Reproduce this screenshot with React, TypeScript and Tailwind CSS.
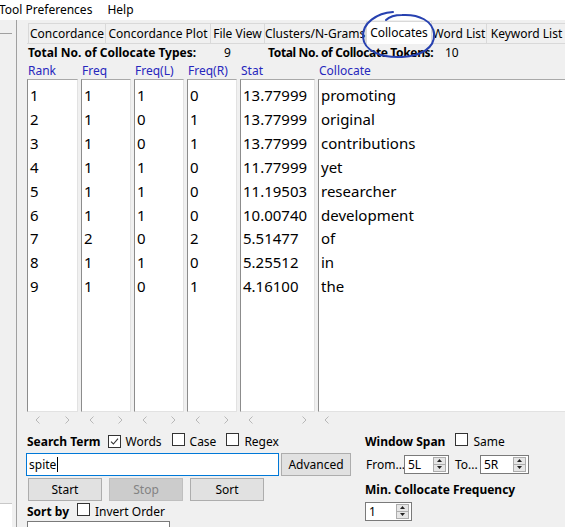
import React from "react"

type Row = [string, string, string, string, string, string]

const ROWS: Row[] = [
  ["1", "1", "1", "0", "13.77999", "promoting"],
  ["2", "1", "0", "1", "13.77999", "original"],
  ["3", "1", "0", "1", "13.77999", "contributions"],
  ["4", "1", "1", "0", "11.77999", "yet"],
  ["5", "1", "1", "0", "11.19503", "researcher"],
  ["6", "1", "1", "0", "10.00740", "development"],
  ["7", "2", "0", "2", "5.51477", "of"],
  ["8", "1", "1", "0", "5.25512", "in"],
  ["9", "1", "0", "1", "4.16100", "the"],
]

const COLUMNS = [
  { label: "Rank", width: "w-[51px]" },
  { label: "Freq", width: "w-[50px]" },
  { label: "Freq(L)", width: "w-[50px]" },
  { label: "Freq(R)", width: "w-[50px]" },
  { label: "Stat", width: "w-[75px]" },
  { label: "Collocate", width: "w-[260px]" },
]

const TABS = [
  { label: "Concordance", width: "w-[78px]" },
  { label: "Concordance Plot", width: "w-[105px]" },
  { label: "File View", width: "w-[54px]" },
  { label: "Clusters/N-Grams", width: "w-[101px]" },
  { label: "Collocates", width: "w-[66px]", active: true },
  { label: "Word List", width: "w-[55px]" },
  { label: "Keyword List", width: "w-[80px]" },
]

function Check({ checked }: { checked?: boolean }) {
  return (
    <span className="inline-flex h-[13px] w-[13px] shrink-0 items-center justify-center border border-[#333] bg-white">
      {checked && (
        <svg width="9" height="9" viewBox="0 0 9 9">
          <path d="M1 4.6 L3.4 7 L8 1.6" stroke="#333" strokeWidth="1.1" fill="none" />
        </svg>
      )}
    </span>
  )
}

function Chevron({ dir }: { dir: "left" | "right" }) {
  return (
    <svg width="5" height="8" viewBox="0 0 5 8">
      <path
        d={dir === "left" ? "M4.5 0.5 L1 4 L4.5 7.5" : "M0.5 0.5 L4 4 L0.5 7.5"}
        stroke="#b8b8b8"
        strokeWidth="1"
        fill="none"
      />
    </svg>
  )
}

function Spinner({ value, width }: { value: string; width: string }) {
  return (
    <div className={`flex h-[19px] ${width} shrink-0 border border-[#7a7a7a] bg-white`}>
      <span className="flex-1 pl-[3px] text-[12px] leading-[17px]">{value}</span>
      <div className="my-[1px] mr-[2px] flex w-[13px] flex-col">
        <span className="flex h-[8px] items-center justify-center border border-[#adadad] bg-[#e6e6e6]">
          <svg width="5" height="3" viewBox="0 0 5 3">
            <path d="M0 3 L2.5 0 L5 3 Z" fill="#222" />
          </svg>
        </span>
        <span className="flex h-[8px] items-center justify-center border border-t-0 border-[#adadad] bg-[#e6e6e6]">
          <svg width="5" height="3" viewBox="0 0 5 3">
            <path d="M0 0 L2.5 3 L5 0 Z" fill="#222" />
          </svg>
        </span>
      </div>
    </div>
  )
}

function Button({ label, width, disabled }: { label: string; width: string; disabled?: boolean }) {
  return (
    <div
      className={`flex h-[23px] ${width} shrink-0 items-center justify-center border text-[12px] ${
        disabled ? "border-[#bfbfbf] bg-[#cccccc] text-[#838383]" : "border-[#adadad] bg-[#e1e1e1] text-black"
      }`}
    >
      {label}
    </div>
  )
}

export default function App() {
  return (
    <div className="relative h-[527px] w-[565px] overflow-hidden bg-[#f0f0f0] font-['Noto_Sans',sans-serif] text-black">
      {/* Menu bar */}
      <div className="flex h-[20px] items-center bg-white text-[12px]">
        <span className="-ml-[1px]">Tool Preferences</span>
        <span className="ml-[15px]">Help</span>
      </div>

      <div className="flex h-[507px]">
        {/* Left panel strip */}
        <div className="flex w-[17px] shrink-0 flex-col border-r border-[#a0a0a0]">
          <div className="mt-[13px] w-[12px] border-t border-[#a0a0a0]" />
          <div className="flex-1" />
          <div className="h-[24px] w-[12px] border-t border-[#c8c8c8] bg-white" />
        </div>

        {/* Main tab panel */}
        <div className="flex min-w-0 flex-1 flex-col overflow-hidden pl-[10px]">
          {/* Tabs */}
          <div className="mt-[4px] flex h-[20px] shrink-0 items-end border-b border-[#d9d9d9] pl-[1px]">
            {TABS.map((tab) =>
              tab.active ? (
                <div
                  key={tab.label}
                  className={`-mb-[1px] flex h-[23px] ${tab.width} shrink-0 items-center justify-center border border-b-0 border-[#d9d9d9] bg-white text-[12px]`}
                >
                  {tab.label}
                </div>
              ) : (
                <div
                  key={tab.label}
                  className={`flex h-[20px] ${tab.width} shrink-0 items-center justify-center whitespace-nowrap border border-b-0 border-l-0 border-[#d9d9d9] bg-[#f0f0f0] pt-[1px] text-[12px] first:border-l`}
                >
                  {tab.label}
                </div>
              )
            )}
          </div>

          {/* Totals */}
          <div className="flex h-[18px] shrink-0 items-center pl-[1px] text-[12px]">
            <span className="w-[196px] shrink-0 font-bold">Total No. of Collocate Types:</span>
            <span className="w-[44px] shrink-0">9</span>
            <span className="w-[177px] shrink-0 whitespace-nowrap font-bold tracking-[-0.35px]">
              Total No. of Collocate Tokens:
            </span>
            <span>10</span>
          </div>

          {/* Column headers */}
          <div className="flex h-[17px] shrink-0 items-center gap-[3px] text-[12px] text-[#2727bd]">
            {COLUMNS.map((col) => (
              <div key={col.label} className={`${col.width} shrink-0 pl-[1px]`}>
                {col.label}
              </div>
            ))}
          </div>

          {/* Lists */}
          <div className="flex h-[333px] shrink-0 gap-[3px]">
            {COLUMNS.map((col, ci) => (
              <div
                key={col.label}
                className={`${col.width} shrink-0 border border-[#e2e2e2] border-l-[#8c8c8c] border-t-[#a9a9a9] bg-white pl-[2px] pt-[4px] text-[15px] leading-[23.9px]`}
              >
                {ROWS.map((row) => (
                  <div key={row[0]} className="whitespace-nowrap">
                    {row[ci]}
                  </div>
                ))}
              </div>
            ))}
          </div>

          {/* Horizontal scroll arrows */}
          <div className="flex h-[16px] shrink-0 gap-[3px]">
            {COLUMNS.map((col, ci) => (
              <div
                key={col.label}
                className={`${col.width} flex shrink-0 items-center justify-between ${ci === 5 ? "pl-[6px]" : "px-[8px]"}`}
              >
                <Chevron dir="left" />
                {ci !== 5 && <Chevron dir="right" />}
              </div>
            ))}
          </div>

          {/* Search controls */}
          <div className="flex shrink-0">
            <div className="flex w-[338px] shrink-0 flex-col">
              <div className="mt-[4px] flex h-[20px] items-center text-[12px]">
                <span className="font-bold">Search Term</span>
                <span className="ml-[7px]"><Check checked /></span>
                <span className="ml-[5px]">Words</span>
                <span className="ml-[10px]"><Check /></span>
                <span className="ml-[5px]">Case</span>
                <span className="ml-[10px]"><Check /></span>
                <span className="ml-[5px]">Regex</span>
              </div>
              <div className="mt-[1px] flex gap-[2px]">
                <div className="-ml-[1px] flex h-[23px] w-[253px] items-center border border-[#0078d7] bg-white pl-[2px] text-[12px]">
                  spite
                  <span className="ml-[1px] h-[15px] w-[1px] bg-black" />
                </div>
                <Button label="Advanced" width="w-[70px]" />
              </div>
              <div className="mt-[2px] flex gap-[7px] pl-[1px]">
                <Button label="Start" width="w-[74px]" />
                <Button label="Stop" width="w-[74px]" disabled />
                <Button label="Sort" width="w-[74px]" />
              </div>
              <div className="mt-[1px] flex h-[19px] items-center text-[12px]">
                <span className="font-bold">Sort by</span>
                <span className="ml-[8px]"><Check /></span>
                <span className="ml-[5px]">Invert Order</span>
              </div>
              <div className="h-[10px] w-[143px] border border-b-0 border-[#7a7a7a] bg-white" />
            </div>

            <div className="flex flex-col">
              <div className="mt-[4px] flex h-[20px] items-center text-[12px]">
                <span className="font-bold">Window Span</span>
                <span className="ml-[10px]"><Check /></span>
                <span className="ml-[5px]">Same</span>
              </div>
              <div className="mt-[3px] flex h-[19px] items-center text-[12px]">
                <span className="w-[39px] shrink-0 pl-[1px]">From...</span>
                <Spinner value="5L" width="w-[45px]" />
                <span className="ml-[6px] w-[25px] shrink-0">To...</span>
                <Spinner value="5R" width="w-[49px]" />
              </div>
              <div className="mt-[6px] flex h-[20px] items-center whitespace-nowrap text-[12px] font-bold">
                Min. Collocate Frequency
              </div>
              <div className="mt-[2px]">
                <Spinner value="1" width="w-[47px]" />
              </div>
            </div>
          </div>
        </div>
      </div>

      {/* Hand-drawn annotation around the Collocates tab */}
      <svg
        className="pointer-events-none absolute left-[355px] top-[6px]"
        width="90"
        height="60"
        viewBox="0 0 90 60"
      >
        <path
          d="M38 6 C22 7 7 17 8 31 C9 45 26 52 47 51 C66 50 80 42 79 28 C78 15 64 8 47 9 C40 9 34 11 31 14"
          stroke="#2741b0"
          strokeWidth="2"
          fill="none"
          strokeLinecap="round"
        />
      </svg>
    </div>
  )
}
